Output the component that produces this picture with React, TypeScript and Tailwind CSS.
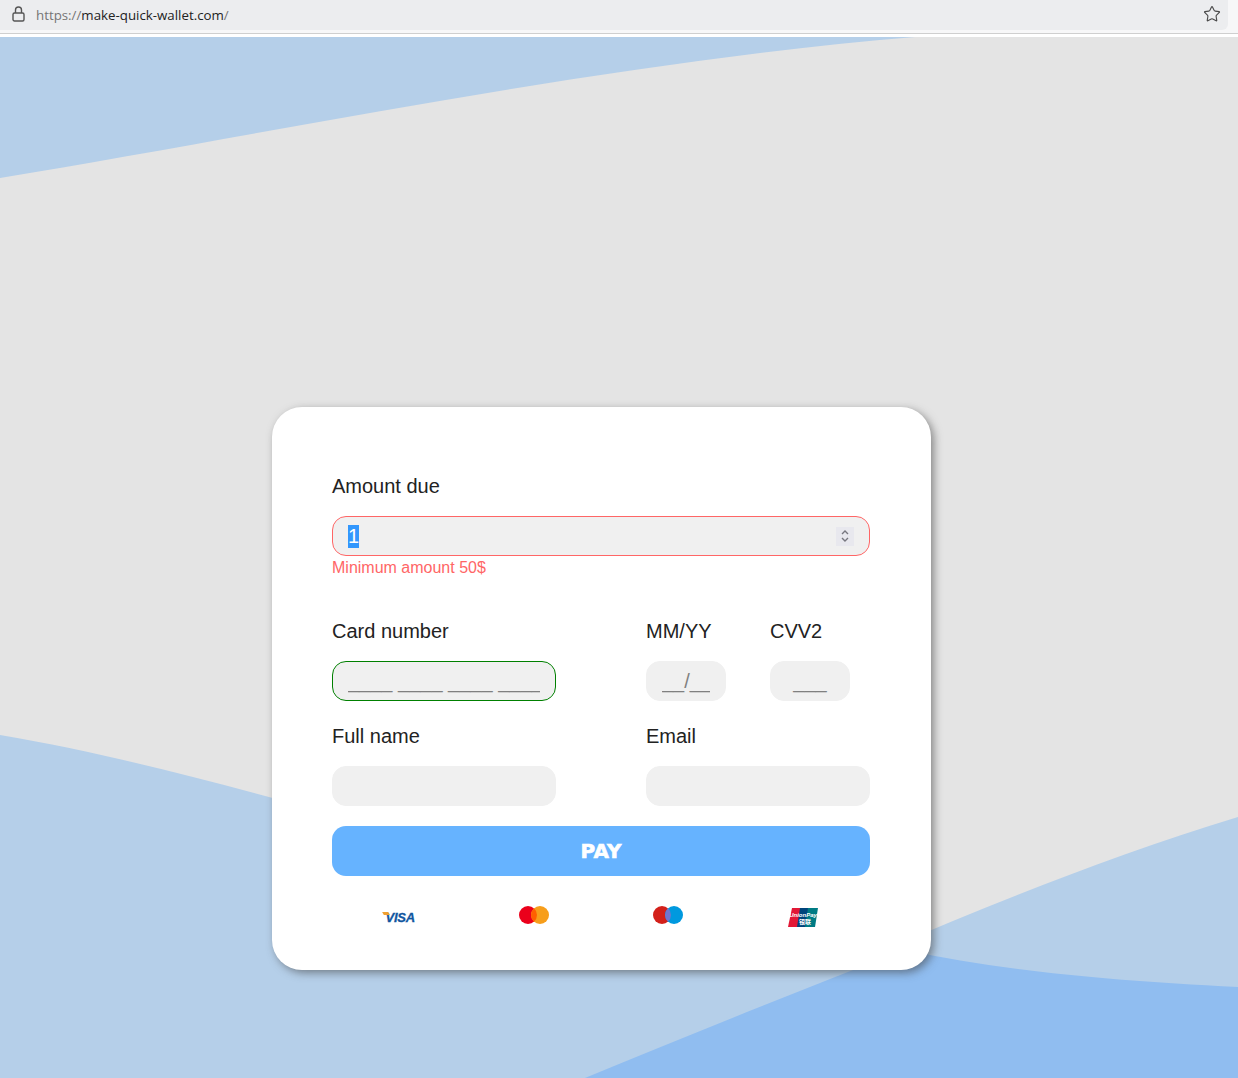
import { Star } from "lucide-react";

const labelClass = "text-[20px] leading-[23px] text-[#222222]";
const inputClass =
  "block h-10 rounded-[14px] border border-[#f0f0f0] bg-[#f0f0f0] px-[15px] text-[20px] outline-none placeholder:text-[#808080]";

function Background() {
  return (
    <svg className="absolute inset-0 h-full w-full" viewBox="0 37 1238 1041" preserveAspectRatio="none">
      <path d="M0 178C290 130 610 62 915 37L0 37Z" fill="#b5cfe9" />
      <path d="M0 735C300 785 620 930 1238 987L1238 1078L0 1078Z" fill="#b5cfe9" />
      <path d="M1238 817C1000 890 800 990 585 1078L1238 1078Z" fill="#b5cfe9" />
      <path d="M1238 987C1100 980 1000 970 905 950C800 990 690 1035 585 1078L1238 1078Z" fill="#90bdf0" />
    </svg>
  );
}

function AddressBar() {
  return (
    <div className="h-[37px] bg-white">
      <div className="h-[34px] border-b border-[#cfcfcf] bg-[#f7f7f8]">
        <div className="flex h-[30px] w-[1228px] items-center rounded-br-md bg-[#ecedef] pl-3">
          <svg width="13" height="16" viewBox="0 0 13 16" fill="none" stroke="#555" strokeWidth="1.4" className="-translate-y-px">
            <rect x="1" y="7" width="11" height="8" rx="1.5" />
            <path d="M3.5 7V4a3 3 0 0 1 6 0v3" />
          </svg>
          <span className="ml-[11px] translate-y-px font-['Open_Sans',sans-serif] text-[13.3px] text-[#757575]">
            https://<span className="text-[#222222]">make-quick-wallet.com</span>/
          </span>
          <Star className="ml-auto -translate-x-[7px] -translate-y-px" size={18} strokeWidth={1.5} color="#4a4a4a" />
        </div>
      </div>
    </div>
  );
}

function Spinner() {
  return (
    <div className="flex h-[19px] w-[18px] items-center justify-center bg-[#e8e8ee]">
      <svg width="10" height="14" viewBox="0 0 10 14" fill="none" stroke="#77777f" strokeWidth="1.4">
        <path d="M2 5l3-3 3 3" />
        <path d="M2 9l3 3 3-3" />
      </svg>
    </div>
  );
}

function Brands() {
  return (
    <div className="mt-[28px] grid grid-cols-4">
      <div className="flex h-[26px] items-center justify-center">
        <span className="relative translate-x-px font-['Liberation_Sans',sans-serif] text-[13px] font-bold italic leading-none tracking-[-0.2px] text-[#10569f] [-webkit-text-stroke:0.3px_#10569f]">
          VISA
          <span className="absolute left-[-2px] top-[1px] h-[3px] w-[6px] skew-x-[30deg] bg-[#f0a030]" />
        </span>
      </div>
      <div className="flex h-[26px] items-center justify-center">
        <svg width="30" height="18" viewBox="0 0 30 18" className="-translate-y-[2px]">
          <circle cx="9" cy="9" r="9" fill="#eb001b" />
          <circle cx="21" cy="9" r="9" fill="#f79e1b" />
          <path d="M15 2.3a9 9 0 0 1 0 13.4a9 9 0 0 1 0-13.4Z" fill="#ff5f00" />
        </svg>
      </div>
      <div className="flex h-[26px] items-center justify-center">
        <svg width="30" height="18" viewBox="0 0 30 18" className="-translate-y-[2px]">
          <circle cx="9" cy="9" r="9" fill="#d3201a" />
          <circle cx="21" cy="9" r="9" fill="#0099df" />
          <path d="M15 2.3a9 9 0 0 1 0 13.4a9 9 0 0 1 0-13.4Z" fill="#7375cf" />
        </svg>
      </div>
      <div className="flex h-[26px] items-center justify-center">
        <svg width="30" height="19" viewBox="0 0 30 19">
          <path d="M4 0H13L10 19H0Z" fill="#e21836" />
          <path d="M12 0H22L19 19H9Z" fill="#00447c" />
          <path d="M20 0H30L27 19H17Z" fill="#007b84" />
          <text x="15" y="9" textAnchor="middle" fontSize="6" fontWeight="700" fontStyle="italic" fill="#fff" fontFamily="Liberation Sans">
            UnionPay
          </text>
          <text x="17" y="16" textAnchor="middle" fontSize="6" fontWeight="700" fill="#fff" fontFamily="Noto Sans CJK SC">
            银联
          </text>
        </svg>
      </div>
    </div>
  );
}

export default function App() {
  return (
    <div className="h-[1078px] w-[1238px] overflow-hidden font-['Liberation_Sans',sans-serif]">
      <AddressBar />
      <main className="relative h-[1041px] bg-[#e4e4e4]">
        <Background />
        <div className="relative ml-[272px] w-[659px] translate-y-[370px] rounded-[30px] bg-white pb-[40px] pl-[60px] pr-[61px] pt-[68px] shadow-[3px_3px_8px_rgba(60,60,60,0.55)]">
          <div className={labelClass}>Amount due</div>
          <div className="mt-[18px] flex h-10 items-center justify-between rounded-[14px] border border-[#ff6666] bg-[#f0f0f0] pl-[15px] pr-[15px]">
            <span className="bg-[#3297fd] text-[20px] leading-[23px] text-white">1</span>
            <Spinner />
          </div>
          <p className="mt-[3px] text-[16px] leading-[18px] text-[#ff6666]">Minimum amount 50$</p>

          <div className="mt-[43px] flex">
            <div className="w-[314px]">
              <div className={labelClass}>Card number</div>
              <input
                className={`${inputClass} mt-[18px] w-[224px] !border-[#008000]`}
                placeholder="____ ____ ____ ____"
              />
            </div>
            <div className="w-[124px]">
              <div className={labelClass}>MM/YY</div>
              <input className={`${inputClass} mt-[18px] w-20 text-center`} placeholder="__/__" />
            </div>
            <div>
              <div className={labelClass}>CVV2</div>
              <input className={`${inputClass} mt-[18px] w-20 text-center`} placeholder="___" />
            </div>
          </div>

          <div className="mt-[24px] flex">
            <div className="w-[314px]">
              <div className={labelClass}>Full name</div>
              <input className={`${inputClass} mt-[18px] w-[224px]`} />
            </div>
            <div>
              <div className={labelClass}>Email</div>
              <input className={`${inputClass} mt-[18px] w-[224px]`} />
            </div>
          </div>

          <button className="mt-5 block h-[50px] w-full rounded-[14px] bg-[#66b3ff] font-['DejaVu_Sans',sans-serif] text-[20px] font-bold text-white [-webkit-text-stroke:0.6px_white]">
            PAY
          </button>

          <Brands />
        </div>
      </main>
    </div>
  );
}
